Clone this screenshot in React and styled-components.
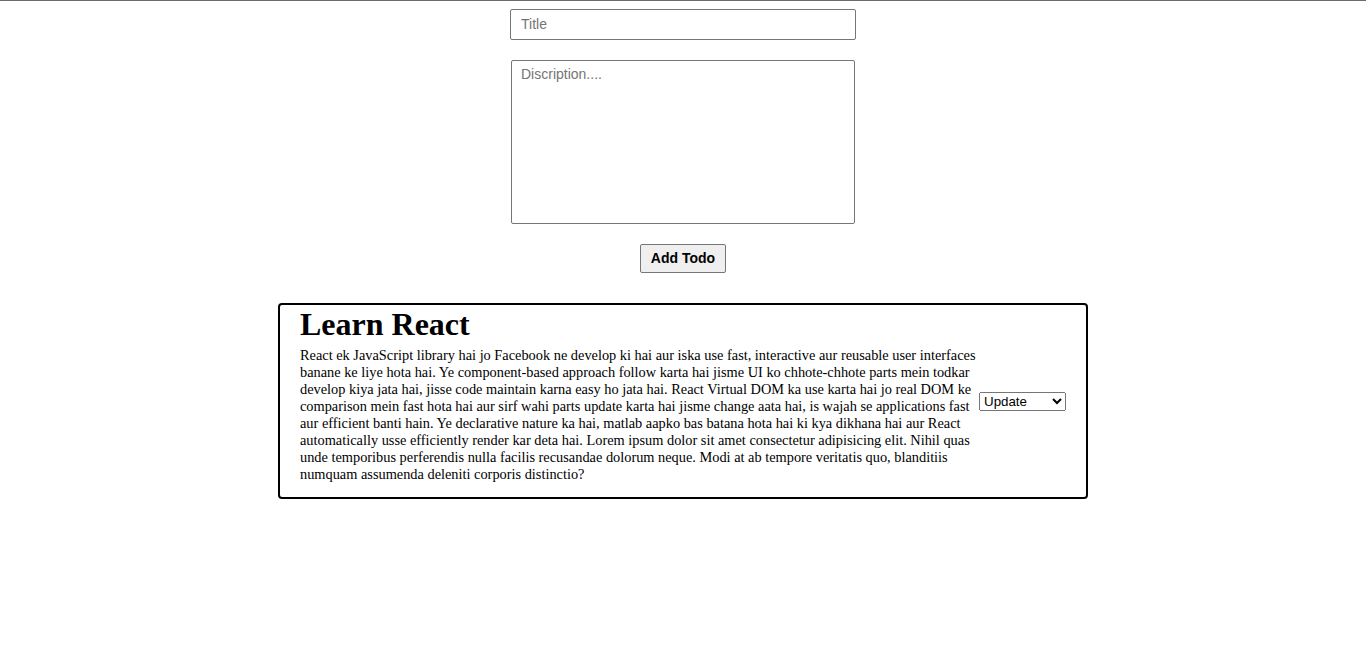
import React from "react";
import styled, { createGlobalStyle } from "styled-components";

const Global = createGlobalStyle`
  html, body { margin: 0; padding: 0; background: #fff; }
  body { font-family: "Liberation Serif", "Times New Roman", serif; color: #000; }
`;

const TopRule = styled.div`
  height: 1px;
  background: #6b6b6b;
`;

const Page = styled.div`
  display: flex;
  flex-direction: column;
  align-items: center;
  padding-top: 8px;
`;

const Form = styled.form`
  display: flex;
  flex-direction: column;
  align-items: center;
`;

const TitleInput = styled.input`
  box-sizing: border-box;
  width: 346px;
  height: 31px;
  padding: 0 10px 1px;
  border: 1px solid #767676;
  border-radius: 2px;
  font-family: "Liberation Sans", Arial, sans-serif;
  font-size: 14px;
  outline: none;
  &::placeholder { color: #757575; }
`;

const DescArea = styled.textarea`
  box-sizing: border-box;
  width: 344px;
  height: 164px;
  margin-top: 20px;
  padding: 5px 9px;
  border: 1px solid #767676;
  border-radius: 2px;
  font-family: "Liberation Sans", Arial, sans-serif;
  font-size: 14px;
  resize: none;
  outline: none;
  &::placeholder { color: #757575; }
`;

const AddButton = styled.button`
  box-sizing: border-box;
  width: 86px;
  height: 29px;
  margin-top: 20px;
  border: 1px solid #767676;
  border-radius: 2px;
  background: #efefef;
  font-family: "Liberation Sans", Arial, sans-serif;
  font-weight: bold;
  font-size: 14px;
  color: #000;
  padding: 0 0 1px;
`;

const Card = styled.div`
  box-sizing: border-box;
  width: 810px;
  margin-top: 30px;
  border: 2px solid #000;
  border-radius: 4px;
  padding: 0 20px;
  display: flex;
  align-items: center;
`;

const Body = styled.div`
  flex: 1;
  padding: 1px 0 14px;
`;

const Heading = styled.h1`
  margin: 0;
  font-size: 32px;
  font-weight: bold;
  line-height: 37px;
`;

const Text = styled.p`
  margin: 4px 0 0;
  font-size: 14.35px;
  line-height: 17px;
`;

const StatusSelect = styled.select`
  box-sizing: border-box;
  width: 87px;
  height: 19px;
  font-family: "Liberation Sans", Arial, sans-serif;
  font-size: 13.33px;
`;

const todo = {
  title: "Learn React",
  description:
    "React ek JavaScript library hai jo Facebook ne develop ki hai aur iska use fast, interactive aur reusable user interfaces banane ke liye hota hai. Ye component-based approach follow karta hai jisme UI ko chhote-chhote parts mein todkar develop kiya jata hai, jisse code maintain karna easy ho jata hai. React Virtual DOM ka use karta hai jo real DOM ke comparison mein fast hota hai aur sirf wahi parts update karta hai jisme change aata hai, is wajah se applications fast aur efficient banti hain. Ye declarative nature ka hai, matlab aapko bas batana hota hai ki kya dikhana hai aur React automatically usse efficiently render kar deta hai. Lorem ipsum dolor sit amet consectetur adipisicing elit. Nihil quas unde temporibus perferendis nulla facilis recusandae dolorum neque. Modi at ab tempore veritatis quo, blanditiis numquam assumenda deleniti corporis distinctio?",
};

export default function App() {
  return (
    <>
      <Global />
      <TopRule />
      <Page>
        <Form onSubmit={(e) => e.preventDefault()}>
          <TitleInput placeholder="Title" />
          <DescArea placeholder="Discription...." />
          <AddButton type="submit">Add Todo</AddButton>
        </Form>
        <Card>
          <Body>
            <Heading>{todo.title}</Heading>
            <Text>{todo.description}</Text>
          </Body>
          <StatusSelect defaultValue="Update">
            <option>Update</option>
            <option>Pending</option>
            <option>Completed</option>
          </StatusSelect>
        </Card>
      </Page>
    </>
  );
}
